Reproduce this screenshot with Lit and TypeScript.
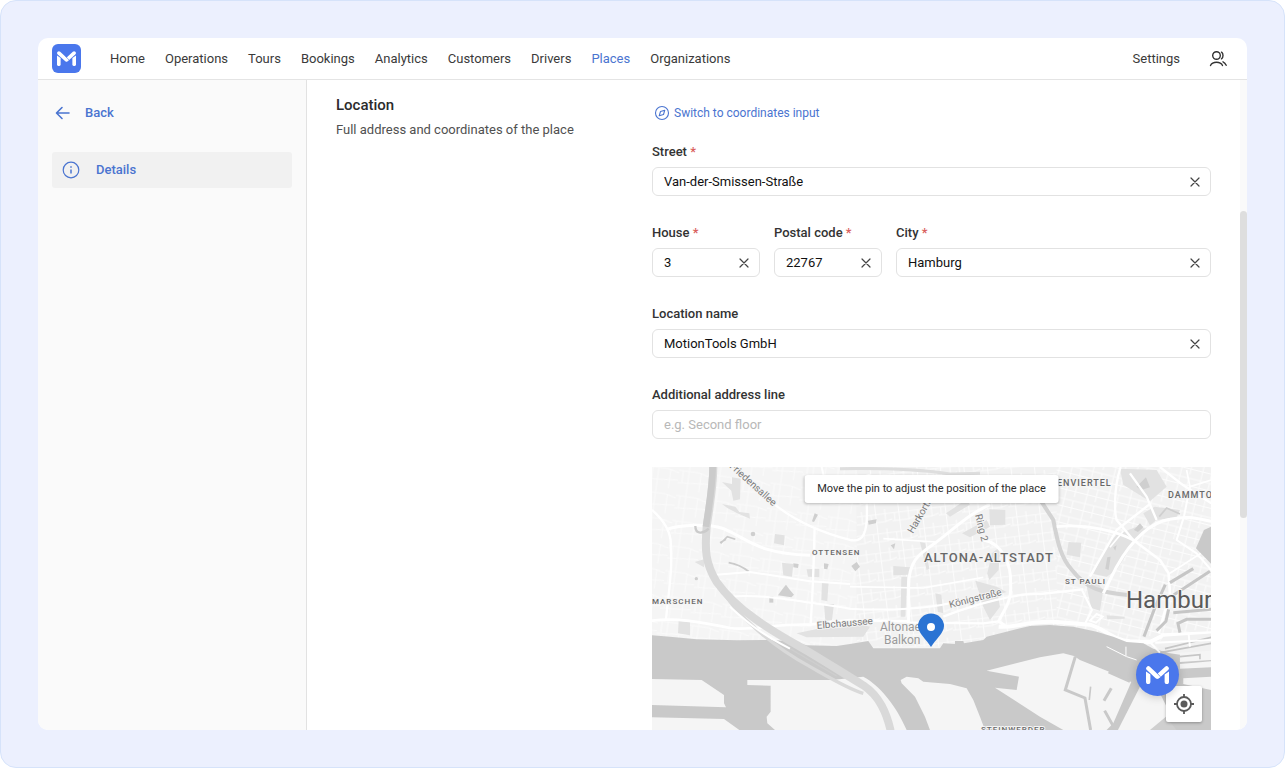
import { LitElement, html, css, svg, nothing } from "lit";
import { customElement, property } from "lit/decorators.js";

const logoMark = svg`
  <path d="M0 16 L13 25 V47 a6.500 6.500 0 0 1 -13 0Z" fill="#fff"/>
  <path d="M68 16 L55 25 V47 a6.500 6.500 0 0 0 13 0Z" fill="#fff"/>
  <path d="M61 7 L36 30" stroke="#fff" stroke-width="13" stroke-linecap="round"/>
  <path d="M7 7 L33 31" stroke="#fff" stroke-width="13" stroke-linecap="round"/>
  <path d="M31 19 L43 32" stroke="#4a77ec" stroke-width="2"/>
`;

@customElement("place-field")
class PlaceField extends LitElement {
  @property() label = "";
  @property() value = "";
  @property() placeholder = "";
  @property({ type: Boolean }) required = false;

  static styles = css`
    :host { display: block; min-width: 0; }
    .label { display: block; font-size: 13px; line-height: 20px; font-weight: 500; color: #333; margin-bottom: 5px; }
    .star { color: #d9605c; }
    .box {
      display: flex; align-items: center; height: 29px; box-sizing: border-box;
      border: 1px solid #e2e2e2; border-radius: 6px; background: #fff; padding: 0 7px 0 11px;
    }
    .input {
      flex: 1; min-width: 0; width: 0; border: 0; outline: 0; padding: 0; background: none;
      font: 400 13px/20px Roboto, "Noto Sans", sans-serif; color: #111;
    }
    .input::placeholder { color: #b8b8b8; opacity: 1; }
    .clear { display: flex; border: 0; padding: 0; background: none; width: 16px; height: 16px; cursor: pointer; }
  `;

  render() {
    return html`
      <label class="label" for="field">${this.label}${this.required ? html` <span class="star">*</span>` : nothing}</label>
      <div class="box">
        <input class="input" id="field" type="text" .value=${this.value} placeholder=${this.placeholder} />
        ${this.value
          ? html`<button class="clear" aria-label="Clear">
              <svg width="16" height="16" viewBox="0 0 16 16" stroke="#444" stroke-width="1.200" stroke-linecap="round">
                <path d="M4 4 L12 12 M12 4 L4 12" />
              </svg>
            </button>`
          : nothing}
      </div>
    `;
  }
}

@customElement("place-map")
class PlaceMap extends LitElement {
  static styles = css`
    :host { display: block; position: relative; overflow: hidden; background: #f5f5f5; }
    .canvas { display: block; position: absolute; inset: 0; width: 100%; height: 100%; font-family: Roboto, "Noto Sans", sans-serif; }
    .district { font-size: 8px; font-weight: 500; letter-spacing: 1px; fill: #686868; }
    .quarter { font-size: 9px; }
    .borough { font-size: 13px; }
    .street { font-size: 10px; fill: #7c7c7c; }
    .park { font-size: 12px; fill: #9a9a9a; }
    .town { font-size: 24px; fill: #5a5a5a; }
    .halo { paint-order: stroke; stroke: #f5f5f5; stroke-width: 2px; stroke-linejoin: round; }
    .hint {
      position: absolute; top: 8px; left: 50%; transform: translateX(-50%); white-space: nowrap;
      background: #fff; border-radius: 3px; padding: 4px 13px; font-size: 11px; line-height: 20px; color: #2b2b2b;
      box-shadow: 0 1px 3px rgba(0, 0, 0, 0.25);
    }
    .locate {
      position: absolute; right: 9px; bottom: 8px; width: 36px; height: 36px; padding: 0; border: 0; border-radius: 2px;
      background: #fff; display: flex; align-items: center; justify-content: center; box-shadow: 0 1px 3px rgba(0, 0, 0, 0.3);
    }
  `;

  render() {
    return html`
      <svg class="canvas" viewBox="0 0 559 263" preserveAspectRatio="xMinYMin slice" fill="none">
        <defs>
          <pattern id="west" width="92" height="76" patternUnits="userSpaceOnUse" patternTransform="rotate(8)">
            <path d="M0 18H60L92 26M30 0V76M0 56L92 48M66 20V76M12 18V54" stroke="#fcfcfc" stroke-width="2.500"/>
          </pattern>
          <pattern id="mid" width="70" height="58" patternUnits="userSpaceOnUse" patternTransform="rotate(-7)">
            <path d="M0 14H70M22 0V58M0 38H48L70 32M50 0V38M8 14V38" stroke="#fcfcfc" stroke-width="3"/>
          </pattern>
          <pattern id="east" width="64" height="50" patternUnits="userSpaceOnUse" patternTransform="rotate(14)">
            <path d="M0 12H64M18 0V50M0 34H64M46 12V50" stroke="#fcfcfc" stroke-width="3"/>
          </pattern>
        </defs>
        <g transform="translate(-2 -7) scale(0.3333)">
          <path d="M620 0H1700V560H620Z" fill="#f2f2f2"/>
          <path d="M0 0H620V560H0Z" fill="url(#west)"/>
          <path d="M620 0H1220V560H620Z" fill="url(#mid)"/>
          <path d="M1220 0H1700V560H1220Z" fill="url(#east)"/>

          <g fill="#e2e2e2">
            <path d="M246 52L272 56L270 118L250 122L244 92L216 66L246 72Z"/>
            <path d="M216 132L256 140L268 156L298 160L300 176L262 160L232 144Z"/>
            <path d="M375 222L404 226L402 256L372 250Z"/>
            <path d="M396 308L430 312L426 350L400 346Z"/>
            <path d="M516 366L536 368L532 424L514 420Z"/><path d="M470 328L508 326V352L474 350Z"/>
            <path d="M522 434L552 432L546 480L526 482Z"/><path d="M86 482L120 486V526L84 520Z"/>
            <path d="M440 520L600 486L660 500L640 530L470 532Z"/>
            <path d="M134 306L162 298V322Z"/>
            <path d="M730 318L780 322L776 344L730 346Z"/><path d="M754 350L772 350L766 470L752 470Z"/>
            <path d="M810 246L826 250L838 326L830 330Z"/>
            <path d="M888 160L950 118L960 134L900 170Z"/>
            <path d="M936 220L1010 180L1020 200L960 232Z"/>
            <path d="M1018 148L1066 150V194L1020 196Z"/>
            <path d="M1026 280L1050 260L1046 330L1018 360L1012 340Z"/>
            <path d="M976 362L1040 380L1070 396L1044 404L1050 440L1020 480L1000 440Z"/>
            <path d="M856 400L874 404L880 460L864 456Z"/>
            <path d="M1410 26L1520 30L1550 80L1500 124L1480 112L1420 74Z"/>
            <path d="M1480 160L1514 140L1590 150L1580 172L1520 180L1500 196Z"/>
            <path d="M1368 262L1400 224L1460 200L1490 206L1450 250L1400 330L1370 350L1330 342Z"/>
            <path d="M1308 370L1340 366L1360 390L1350 452L1324 444Z"/>
            <path d="M1256 246L1294 248L1290 292L1250 284Z"/>
            <path d="M1370 466L1424 470V476L1372 478Z"/>
          </g>
          <g fill="#cfcfcf">
            <path d="M384 406L400 384L408 374L418 388L432 404L424 412Z"/>
            <circle cx="309" cy="222" r="7"/><circle cx="139" cy="356" r="5"/><path d="M358 410H370V428H358Z"/>
            <path d="M430 310L446 312L444 324L430 322ZM522 310L536 312L532 328L522 326ZM486 184L494 160L504 164L492 186Z"/>
            <path d="M1460 80L1488 52L1500 82L1474 90ZM1452 210L1470 190L1480 202L1464 216Z"/>
            <path d="M1372 292L1382 290L1376 330L1366 326ZM1390 262L1400 256L1396 272Z"/>
            <path d="M654 182L680 178L678 190L656 194ZM604 318L620 306L630 320L616 334ZM722 256L736 250L732 268Z"/>
          </g>
          <path d="M212 250L232 230L256 238M210 248L228 238M236 308C262 312 280 322 298 336" stroke="#cacaca" stroke-width="5"/>
          <path d="M570 26C680 24 800 26 900 42L990 40M1140 26" stroke="#dedede" stroke-width="9"/>
          <path d="M1140 100L1174 124L1210 180C1222 240 1230 290 1266 330C1310 386 1350 398 1440 406" stroke="#d3d3d3" stroke-width="12"/>
          <path d="M1528 170L1550 144L1590 162" stroke="#cfcfcf" stroke-width="5"/>

          <g stroke="#fff" stroke-width="6" stroke-linejoin="round">
            <path d="M6 150C40 180 66 220 62 262C68 320 58 380 48 478" stroke-width="7"/>
            <path d="M50 208C90 194 180 190 220 206C300 240 320 280 480 286" stroke-width="9"/>
            <path d="M370 130C430 180 500 214 600 240C640 248 655 220 650 130M494 200C492 280 490 380 482 490" stroke-width="7"/>
            <path d="M515 21L524 60L570 80M570 70L660 44"/>
            <path d="M6 482C80 472 150 486 240 504C300 514 380 490 480 494L600 480L780 484" stroke-width="8"/>
            <path d="M180 346L300 336L480 364L600 372M240 410C330 400 450 424 600 446C720 454 840 444 900 430"/>
            <path d="M600 380L820 384L1000 352M700 236L860 246" stroke-width="5"/>
            <path d="M776 490V380C776 300 810 280 854 250C920 200 960 160 1020 134" stroke-width="9"/>
            <path d="M1000 240C1060 250 1084 320 1082 370C1086 430 1060 450 1046 484L1070 500" stroke-width="9"/>
            <path d="M780 488L1000 490L1046 484M880 470C980 430 1100 400 1170 402L1300 388" stroke-width="7"/>
            <path d="M1046 500C1100 504 1130 482 1220 486L1320 494C1370 510 1390 540 1440 544L1500 546L1540 526L1684 520" stroke-width="12"/>
            <path d="M1220 200C1310 190 1400 214 1450 240L1530 300L1556 340L1560 400L1526 520" stroke-width="8"/>
            <path d="M1360 400L1400 320C1440 250 1490 190 1560 178C1620 166 1640 176 1684 184" stroke-width="9"/>
            <path d="M1412 21C1390 90 1394 160 1400 180L1450 240M1320 350L1400 210L1500 132M1440 40L1490 110L1520 180M1530 21L1600 76L1684 130" stroke-width="7"/>
            <path d="M1602 170L1580 240L1640 280L1684 330M1620 80L1602 170M1296 390L1326 450L1306 490" stroke-width="6"/>
            <path d="M1420 214L1380 262M1610 30L1620 80L1684 60M1560 340L1684 260" stroke-width="5"/>
          </g>

          <path fill="#c9c9c9" d="M0 525L60 530L140 538L260 541L370 540L430 545L470 556L560 558L600 552L655 543L670 565H870L880 550L915 552V543H940L942 550L1000 540L1010 530L1090 510L1140 498L1200 495L1270 500L1340 515L1390 530L1430 546L1480 550L1510 566L1560 580L1700 600V820H0Z"/>
          <path fill="#c9c9c9" d="M1684 200L1662 210L1638 265L1684 312Z"/>
          <path d="M1690 580H1580L1520 560L1540 530L1690 520Z" fill="#f1f1f1"/>
          <g fill="#f5f5f5">
            <path d="M0 657L155 660L222 705V730L228 742L0 735Z"/>
            <path d="M0 772L222 777L268 810H0Z"/>
            <path d="M292 660H545L640 650C690 676 740 740 770 810H375L352 790L350 770L362 755V677L292 675Z"/>
            <path d="M752 660L770 650L805 655L820 665L900 672L950 685L970 720L990 770L1005 810H840L825 770L795 710L755 670Z"/>
            <path d="M1010 632L1170 592L1240 580L1272 588L1290 600L1400 644L1444 666L1390 790L1370 810H1240L1170 770L1035 683L1100 690L1107 650Z"/>
            <path d="M1470 680L1530 700L1550 740L1548 810H1404Z"/>
            <path d="M1590 578L1684 572V600L1590 606ZM1590 612L1684 604V622L1590 626ZM1600 655L1684 650V690L1600 672Z"/>
          </g>
          <path d="M1548 770L1580 810H1500Z" fill="#cfcfcf"/>
          <g stroke="#c9c9c9">
            <path d="M1276 590L1246 690L1305 714L1322 810M1440 664L1376 636M1384 685L1362 722M1364 752L1394 806" stroke-width="9"/>
            <path d="M1322 680L1318 720" stroke-width="5"/>
          </g>
          <g stroke="#c6c6c6" stroke-width="9">
            <path d="M1630 326L1560 368M1680 334L1570 406M1546 374L1516 440L1482 530" />
            <path d="M1684 448L1570 458M1590 518L1584 490L1610 478H1684M1520 512L1548 484L1556 448"/>
            <path d="M1530 578L1684 550M1545 566L1684 532M1590 590L1650 584V598" stroke-width="5"/>
          </g>
          <g stroke="#fff" stroke-width="6">
            <path d="M1500 546L1530 578M1616 522L1620 560M1516 548L1684 540M1320 482L1340 462L1358 470L1338 488Z"/>
            <path d="M1370 560L1430 590L1460 600M1428 560V588" stroke-width="3"/>
          </g>

          <path d="M202 370C260 470 370 560 480 620C540 654 600 690 640 700" stroke="#d9d9d9" stroke-width="10"/>
          <path d="M190 18C190 80 180 130 170 200C164 270 166 310 200 366C260 450 360 510 450 560C520 600 580 640 640 676C690 710 710 760 722 812" stroke="#d9d9d9" stroke-width="24"/>
          <path d="M240 440C310 504 350 530 420 566" stroke="#fff" stroke-width="6"/>
          <path d="M420 566L560 648" stroke="#cecece" stroke-width="4"/>
          <path d="M188 18C188 80 178 130 168 200" stroke="#cbcbcb" stroke-width="20"/>
          <path d="M136 198C136 224 160 222 176 206" stroke="#cbcbcb" stroke-width="7"/>
        </g>

        <g class="street">
          <text class="halo" x="77" y="0" transform="rotate(42 77 0)">Friedensallee</text>
          <text class="halo" x="165" y="162" transform="rotate(-5 165 162)">Elbchaussee</text>
          <text class="halo" x="298" y="141" transform="rotate(-14 298 141)">Königstraße</text>
          <text class="halo" x="261" y="67" transform="rotate(-60 261 67)">Harkortstr</text>
          <text class="halo" x="323" y="48" transform="rotate(76 323 48)">Ring 2</text>
        </g>
        <g class="district">
          <text class="halo" x="0" y="137">MARSCHEN</text>
          <text class="halo" x="160" y="88">OTTENSEN</text>
          <text class="halo" x="413" y="117">ST PAULI</text>
          <text class="halo" x="329" y="265">STEINWERDER</text>
          <text class="halo quarter" x="405" y="19">ENVIERTEL</text>
          <text class="halo quarter" x="516" y="31">DAMMTOR</text>
          <text class="halo borough" x="272" y="95">ALTONA-ALTSTADT</text>
        </g>
        <g class="park">
          <text class="halo" x="228" y="164">Altonaer</text>
          <text class="halo" x="232" y="177">Balkon</text>
        </g>
        <text class="halo town" x="474" y="141">Hamburg</text>

        <path d="M279 180C275 173 266 166 266 159A13 12.500 0 0 1 292 159C292 166 283 173 279 180Z" fill="#2a73d3"/>
        <circle cx="279" cy="160" r="4" fill="#fff"/>
      </svg>
      <div class="hint">Move the pin to adjust the position of the place</div>
      <button class="locate" aria-label="Show my location">
        <svg width="20" height="20" viewBox="0 0 20 20" fill="none" stroke="#5a5a5a" stroke-width="1.800">
          <circle cx="10" cy="10" r="7"/><circle cx="10" cy="10" r="3.500" fill="#5a5a5a" stroke="none"/>
          <path d="M10 0V3M10 17V20M0 10H3M17 10H20"/>
        </svg>
      </button>
    `;
  }
}

@customElement("app-root")
class AppRoot extends LitElement {
  static styles = css`
    :host { display: block; height: 100vh; font-family: Roboto, "Noto Sans", sans-serif; font-size: 13px; line-height: 20px; color: #333; }
    .frame { height: 100%; box-sizing: border-box; padding: 37px; background: #ecf0fe; border: 1px solid #d6e3fa; border-radius: 16px; }
    .window { height: 100%; display: flex; flex-direction: column; position: relative; overflow: hidden; border-radius: 10px; background: #fff; }
    .top { display: flex; align-items: center; gap: 29px; height: 41px; flex: none; padding: 0 20px 0 14px; border-bottom: 1px solid #e4e4e4; }
    .logo { display: flex; align-items: center; justify-content: center; width: 29px; height: 29px; border-radius: 6px; background: #4a77ec; }
    .nav { display: flex; gap: 20px; flex: 1; }
    .link { color: #3a3a3a; text-decoration: none; white-space: nowrap; }
    .active { color: #4a74d0; }
    .user { display: flex; border: 0; background: none; padding: 0; }
    .body { display: flex; flex: 1; min-height: 0; }
    .side { width: 269px; box-sizing: border-box; flex: none; background: #fafafa; border-right: 1px solid #e2e2e2; padding: 23px 14px; display: flex; flex-direction: column; gap: 29px; }
    .back, .item { display: flex; align-items: center; color: #4a74d0; font-weight: 500; text-decoration: none; }
    .back { gap: 14px; padding: 0 3px; }
    .item { gap: 16px; height: 36px; padding: 0 10px; border-radius: 3px; background: #f1f1f1; }
    .main { flex: 1; min-width: 0; display: grid; grid-template-columns: 288px 1fr; column-gap: 28px; padding: 15px 29px 0; }
    .title { margin: 0 0 5px; font-size: 15px; line-height: 20px; font-weight: 500; color: #2b2b2b; }
    .text { margin: 0; color: #505050; }
    .form { display: flex; flex-direction: column; gap: 27px; padding-top: 8px; min-width: 0; min-height: 0; }
    .switch { display: flex; align-items: center; gap: 4px; align-self: flex-start; border: 0; background: none; padding: 0 2px; margin-bottom: -8px; font: inherit; font-size: 12px; color: #4a74d0; }
    .row { display: grid; grid-template-columns: 108px 108px 1fr; gap: 14px; }
    .map { flex: 1; min-height: 0; margin-top: 1px; }
    .track { width: 7px; flex: none; background: #fafafa; }
    .thumb { margin-top: 131px; height: 307px; border-radius: 4px; background: #dedede; }
    .chat {
      position: absolute; right: 68px; bottom: 34px; width: 43px; height: 43px; padding: 0; border: 0; border-radius: 50%;
      background: #4a77ec; display: flex; align-items: center; justify-content: center; box-shadow: 0 1px 10px rgba(0, 0, 0, 0.2);
    }
  `;

  render() {
    const pages = ["Home", "Operations", "Tours", "Bookings", "Analytics", "Customers", "Drivers", "Places", "Organizations"];
    return html`
      <div class="frame">
        <div class="window">
          <header class="top">
            <a class="logo" href="#" aria-label="Start"><svg width="19" height="15" viewBox="0 0 68 53" fill="none">${logoMark}</svg></a>
            <nav class="nav">
              ${pages.map((p) => html`<a class="link ${p === "Places" ? "active" : ""}" href="#">${p}</a>`)}
            </nav>
            <a class="link" href="#">Settings</a>
            <button class="user" aria-label="Account">
              <svg width="18" height="18" viewBox="0 0 18 18" fill="none" stroke="#333" stroke-width="1.400" stroke-linecap="round">
                <circle cx="7.500" cy="5.500" r="3.800"/><path d="M1.500 15.500C3.500 11.200 11.500 11.200 13.500 15.500M12.500 2.200C14.500 3.500 14.500 7.500 12.500 8.800M14 11.800C15.500 12.500 16.500 13.800 17.200 15.300"/>
              </svg>
            </button>
          </header>
          <div class="body">
            <aside class="side">
              <a class="back" href="#">
                <svg width="16" height="20" viewBox="0 0 16 20" fill="none" stroke="#4a74d0" stroke-width="1.600" stroke-linecap="round" stroke-linejoin="round">
                  <path d="M14 10H2M7 4.500L1.500 10L7 15.500"/>
                </svg>
                Back
              </a>
              <a class="item" href="#">
                <svg width="18" height="18" viewBox="0 0 18 18" fill="none" stroke="#4a74d0" stroke-width="1.200">
                  <circle cx="9" cy="9" r="7.800"/><path d="M9 8.500V12.500M9 5.300V6.800" stroke-width="1.500"/>
                </svg>
                Details
              </a>
            </aside>
            <main class="main">
              <section>
                <h2 class="title">Location</h2>
                <p class="text">Full address and coordinates of the place</p>
              </section>
              <section class="form">
                <button class="switch">
                  <svg width="16" height="16" viewBox="0 0 16 16" fill="none" stroke="#4a74d0" stroke-width="1.100">
                    <circle cx="8" cy="8" r="6.500"/><path d="M10.800 5.200L9.500 9.500L5.200 10.800L6.500 6.500Z" stroke-linejoin="round"/>
                  </svg>
                  Switch to coordinates input
                </button>
                <place-field label="Street" required value="Van-der-Smissen-Straße"></place-field>
                <div class="row">
                  <place-field label="House" required value="3"></place-field>
                  <place-field label="Postal code" required value="22767"></place-field>
                  <place-field label="City" required value="Hamburg"></place-field>
                </div>
                <place-field label="Location name" value="MotionTools GmbH"></place-field>
                <place-field label="Additional address line" placeholder="e.g. Second floor"></place-field>
                <place-map class="map"></place-map>
              </section>
            </main>
            <div class="track"><div class="thumb"></div></div>
          </div>
          <button class="chat" aria-label="Open chat"><svg width="23" height="18" viewBox="0 0 68 53" fill="none">${logoMark}</svg></button>
        </div>
      </div>
    `;
  }
}
